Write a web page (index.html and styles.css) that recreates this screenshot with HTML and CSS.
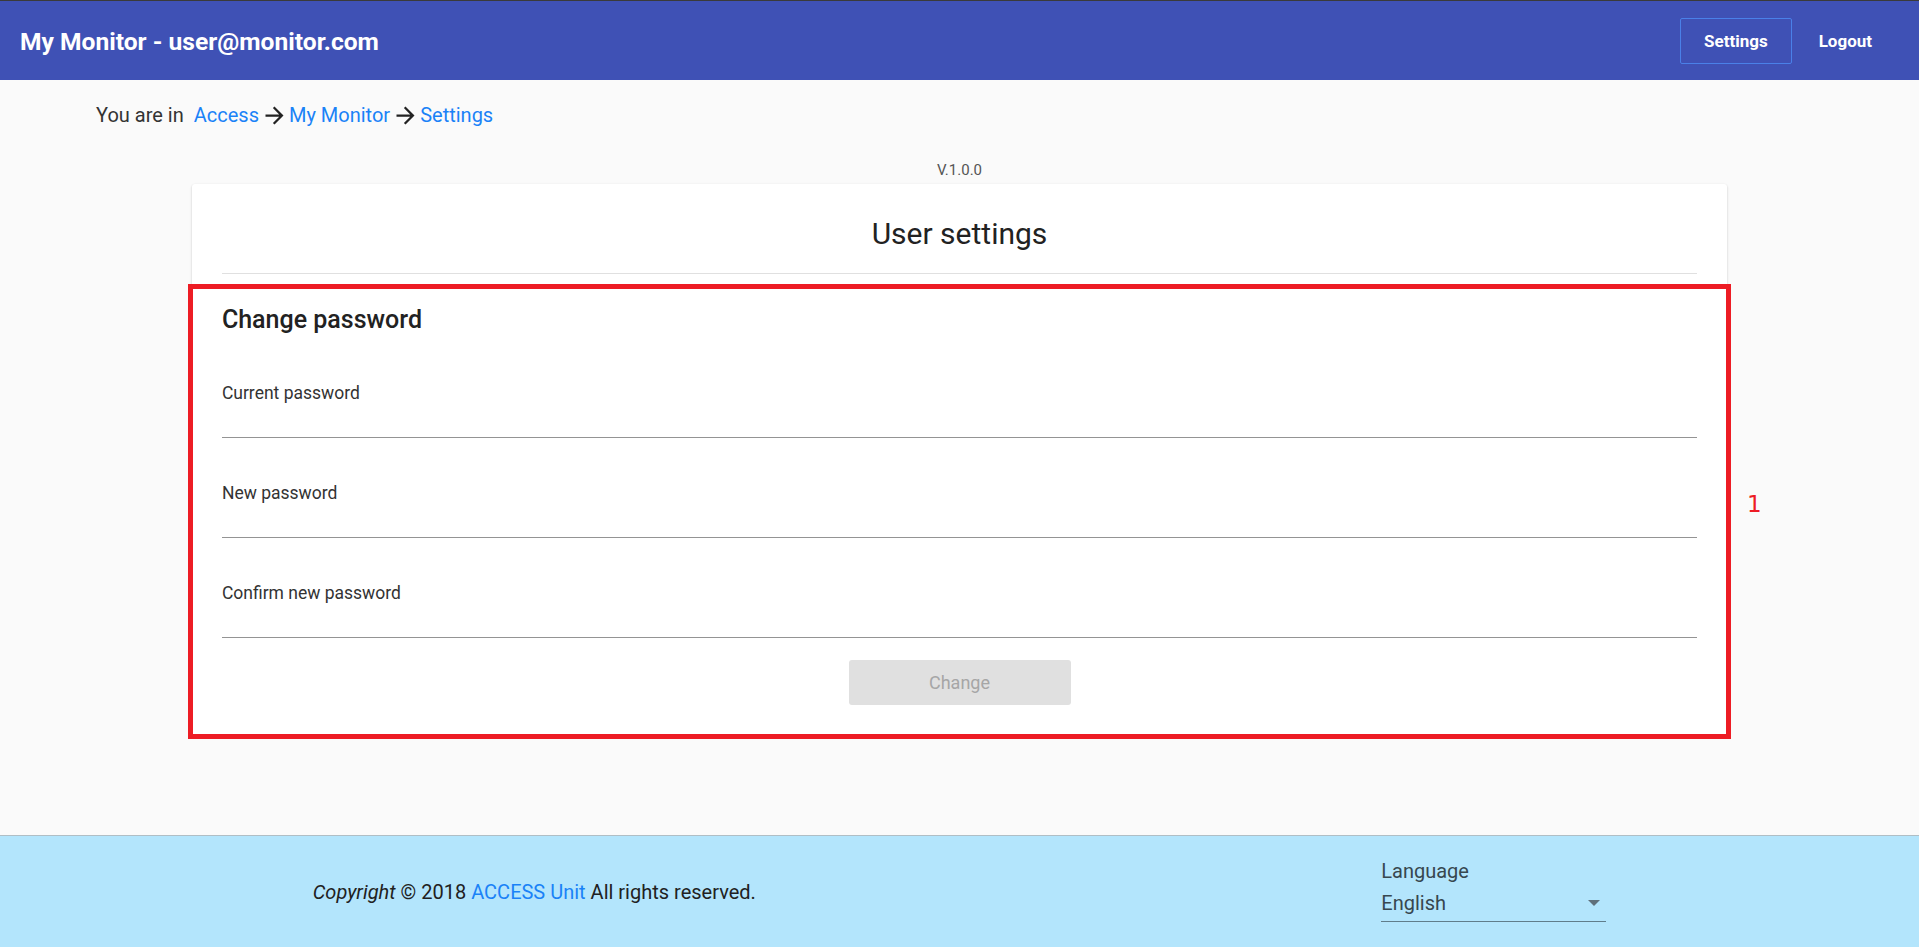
FILE: index.html
```html
<!DOCTYPE html>
<html lang="en">
<head>
<meta charset="utf-8">
<title>My Monitor - Settings</title>
<link rel="stylesheet" href="styles.css">
</head>
<body>
<div class="page">
  <header class="topbar">
    <div class="brand">My Monitor - user@monitor.com</div>
    <nav class="nav">
      <a class="nav-btn active">Settings</a>
      <a class="nav-btn">Logout</a>
    </nav>
  </header>

  <main class="main">
    <div class="crumbs">
      <span class="crumb-lead">You are in</span>
      <a class="crumb-link">Access</a>
      <svg class="crumb-arrow" viewBox="0 0 24 24"><path d="M12 4l-1.41 1.41L16.17 11H4v2h12.17l-5.58 5.59L12 20l8-8z"/></svg>
      <a class="crumb-link">My Monitor</a>
      <svg class="crumb-arrow" viewBox="0 0 24 24"><path d="M12 4l-1.41 1.41L16.17 11H4v2h12.17l-5.58 5.59L12 20l8-8z"/></svg>
      <a class="crumb-link">Settings</a>
    </div>

    <div class="version">V.1.0.0</div>

    <section class="card">
      <h1 class="card-title">User settings</h1>
      <div class="divider"></div>
      <div class="section">
        <h2 class="section-title">Change password</h2>
        <div class="field">
          <label class="field-label">Current password</label>
          <div class="field-line"></div>
        </div>
        <div class="field">
          <label class="field-label">New password</label>
          <div class="field-line"></div>
        </div>
        <div class="field">
          <label class="field-label">Confirm new password</label>
          <div class="field-line"></div>
        </div>
        <div class="actions">
          <button class="btn-disabled" disabled>Change</button>
        </div>
        <span class="marker">1</span>
      </div>
    </section>
  </main>

  <footer class="footer">
    <p class="copyright"><em>Copyright</em> © 2018 <a class="foot-link">ACCESS Unit</a> All rights reserved.</p>
    <div class="lang">
      <div class="lang-label">Language</div>
      <div class="lang-select">
        <span>English</span>
        <span class="lang-caret"></span>
      </div>
    </div>
  </footer>
</div>
</body>
</html>
```

FILE: styles.css
```css
* { box-sizing: border-box; }
html, body { margin: 0; padding: 0; }
body {
  background: #fafafa;
  font-family: Roboto, "Liberation Sans", sans-serif;
  color: #212121;
}
.page {
  min-height: 100vh;
  display: flex;
  flex-direction: column;
}

/* header */
.topbar {
  height: 80px;
  background: #3f51b5;
  border-top: 1px solid #3a3a3a;
  display: flex;
  align-items: center;
  justify-content: space-between;
  padding: 0 23px 0 20px;
}
.brand {
  color: #fff;
  font-weight: 700;
  font-size: 24.6px;
  padding-top: 1px;
}
.nav { display: flex; gap: 3px; }
.nav-btn {
  color: #fff;
  font-weight: 700;
  font-size: 17px;
  height: 46px;
  padding: 0 23px;
  display: flex;
  align-items: center;
  border: 1px solid transparent;
  border-radius: 2px;
}
.nav-btn.active { border-color: #4a80e8; }

/* main */
.main { flex: 1; }
.crumbs {
  display: flex;
  align-items: center;
  padding: 15px 0 0 96px;
  height: 55px;
  font-size: 20px;
  color: #333;
}
.crumb-lead { margin-right: 10px; }
.crumb-link { color: #1a82f7; }
.crumb-arrow { width: 27px; height: 27px; fill: #222; margin: 0 1px 0 2px; }
.version {
  text-align: center;
  font-size: 15px;
  color: #555;
  margin-top: 29px;
  height: 13px;
  line-height: 13px;
}
.card {
  width: 80%;
  margin: 7px auto 0;
  background: #fff;
  border-radius: 3px;
  box-shadow: 0 1px 3px rgba(0,0,0,0.12), 0 1px 2px rgba(0,0,0,0.10);
}
.card-title {
  margin: 0;
  text-align: center;
  font-weight: 400;
  font-size: 30px;
  color: #222;
  height: 89px;
  padding-top: 32px;
  line-height: 36px;
}
.divider {
  height: 1px;
  background: #e0e0e0;
  margin: 0 30px;
}
.section {
  position: relative;
  margin-top: 14px;
  padding: 0 30px 30px;
  outline: 5px solid #ed1c24;
  outline-offset: -1px;
}
.section-title {
  margin: 0;
  font-weight: 500;
  font-size: 25px;
  line-height: 30px;
  padding-top: 17px;
  color: #222;
}
.field {
  height: 100px;
  display: flex;
  flex-direction: column;
  justify-content: flex-end;
}
.field:first-of-type { height: 103px; }
.field-label {
  font-size: 17.5px;
  color: #333;
  line-height: 20px;
  padding-bottom: 34px;
}
.field-line {
  height: 1px;
  background: #949494;
}
.actions {
  display: flex;
  justify-content: center;
  padding-top: 22px;
}
.btn-disabled {
  width: 222px;
  height: 45px;
  background: #e0e0e0;
  color: #a6a6a6;
  border: 0;
  border-radius: 3px;
  font-family: Roboto, "Liberation Sans", sans-serif;
  font-size: 18px;
}
.marker {
  position: absolute;
  left: calc(100% + 20px);
  top: 203px;
  color: #ed1c24;
  font-family: "DejaVu Sans", sans-serif;
  font-size: 23px;
}

/* footer */
.footer {
  height: 112px;
  background: #b3e5fc;
  border-top: 1px solid #b0bec5;
  display: flex;
  justify-content: space-around;
  align-items: center;
}
.copyright {
  margin: 0;
  font-size: 20px;
  color: #212121;
}
.foot-link { color: #1a82f7; }
.lang { width: 225px; color: #37474f; font-size: 20px; margin-top: -3px; }
.lang-label { line-height: 26px; }
.lang-select {
  display: flex;
  justify-content: space-between;
  align-items: center;
  height: 38px;
  border-bottom: 1px solid #607d8b;
  padding-right: 6px;
}
.lang-caret {
  width: 0; height: 0;
  border-left: 6px solid transparent;
  border-right: 6px solid transparent;
  border-top: 6px solid #5f6f7a;
}
```
